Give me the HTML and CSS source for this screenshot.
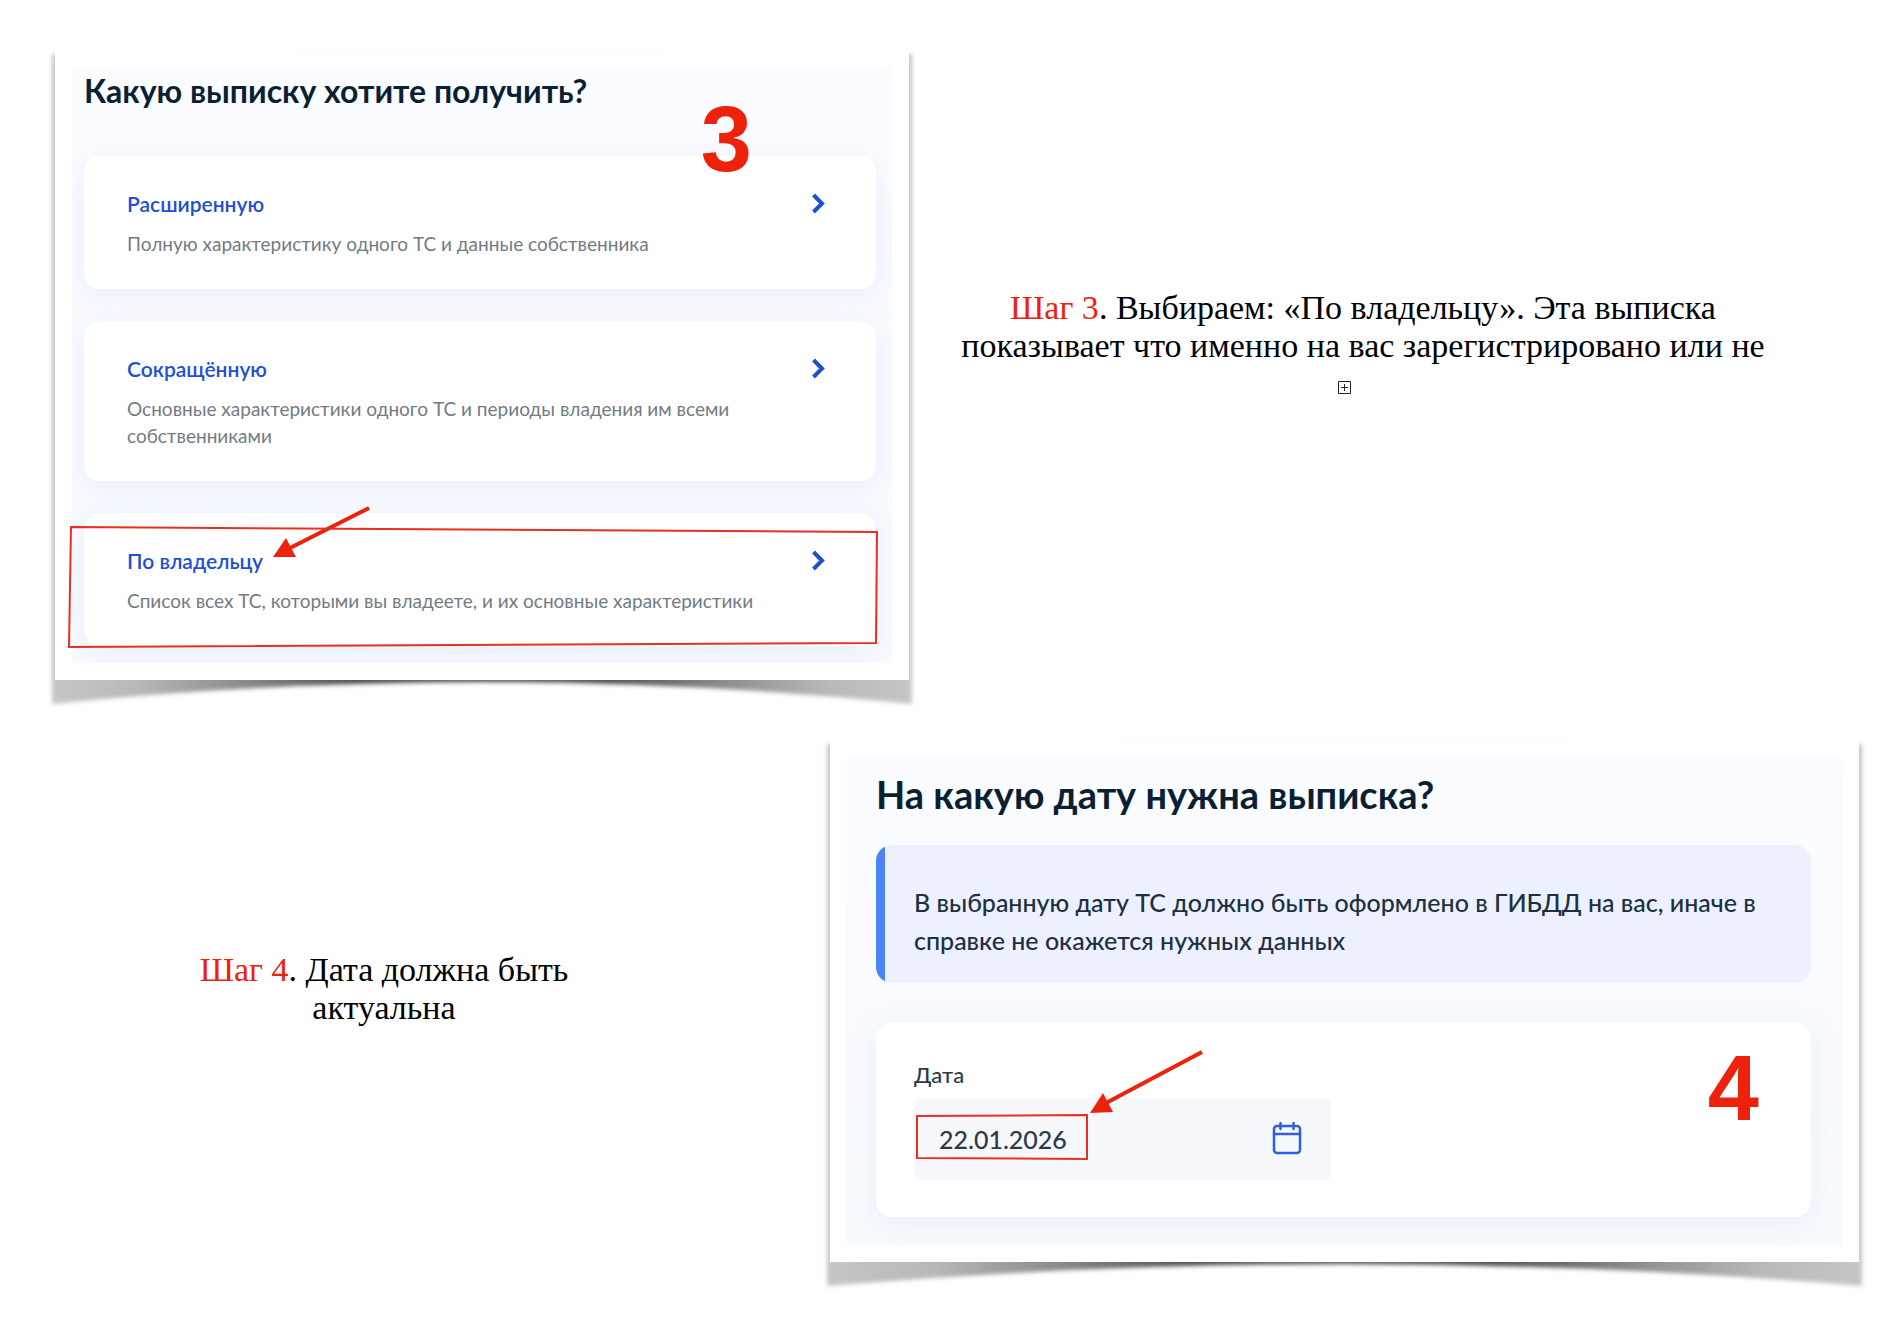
FILE: index.html
```html
<!DOCTYPE html>
<html lang="ru">
<head>
<meta charset="utf-8">
<title>Выписка: шаги 3 и 4</title>
<meta name="viewport" content="width=device-width, initial-scale=1">
<link rel="stylesheet" href="styles.css">
</head>
<body>
<main class="page">
  <section class="row row-three">
    <div class="frame">
      <svg class="curl" viewBox="0 0 854 630" preserveAspectRatio="none" aria-hidden="true">
        <defs>
          <linearGradient id="shade" x1="0" x2="1" y1="0" y2="0">
            <stop offset="0" stop-color="#c6c6c6"/><stop offset=".1" stop-color="#b8b8b8"/>
            <stop offset=".22" stop-color="#8c8c8c"/><stop offset=".35" stop-color="#505050"/>
            <stop offset=".65" stop-color="#505050"/><stop offset=".78" stop-color="#8c8c8c"/>
            <stop offset=".9" stop-color="#b8b8b8"/><stop offset="1" stop-color="#c6c6c6"/>
          </linearGradient>
          <filter id="soft" x="-5%" y="-5%" width="110%" height="112%"><feGaussianBlur stdDeviation="2"/></filter>
        </defs>
        <path d="M-3 4H857V654Q427 610-3 654Z" fill="url(#shade)" filter="url(#soft)"/>
      </svg>
      <div class="sheet">
        <div class="panel panel-list">
          <h2 class="title">Какую выписку хотите получить?</h2>
          <nav class="options">
            <a class="card option" href="#full">
              <span class="option-text"><span class="option-name">Расширенную</span><span class="option-note">Полную характеристику одного ТС и данные собственника</span></span>
              <svg class="chevron" viewBox="0 0 24 28" aria-hidden="true"><path d="M7.500 5 16 13.500 7.500 22"/></svg>
            </a>
            <a class="card option" href="#short">
              <span class="option-text"><span class="option-name">Сокращённую</span><span class="option-note">Основные характеристики одного ТС и периоды владения им всеми собственниками</span></span>
              <svg class="chevron" viewBox="0 0 24 28" aria-hidden="true"><path d="M7.500 5 16 13.500 7.500 22"/></svg>
            </a>
            <a class="card option" href="#owner">
              <span class="option-text"><span class="option-name">По владельцу</span><span class="option-note">Список всех ТС, которыми вы владеете, и их основные характеристики</span></span>
              <svg class="chevron" viewBox="0 0 24 28" aria-hidden="true"><path d="M7.500 5 16 13.500 7.500 22"/></svg>
              <svg class="arrow arrow-owner" viewBox="0 0 100 54" aria-hidden="true"><path class="shaft" d="M97 3 18 43"/><path class="head" d="M1 52 14 33 24 52Z"/></svg>
            </a>
          </nav>
        </div>
      </div>
      <svg class="mark mark-owner" viewBox="0 0 808 122" preserveAspectRatio="none" aria-hidden="true"><path d="M3 1 807 6 806 117 1 121Z"/></svg>
      <strong class="number number-three">3</strong>
    </div>
    <div class="step step-three">
      <p class="step-text"><span class="step-name">Шаг 3</span>. Выбираем: «По владельцу». Эта выписка показывает что именно на вас зарегистрировано или не</p>
      <button class="expand" type="button" aria-label="Развернуть"><svg viewBox="0 0 13 13" aria-hidden="true"><path d="M.5.5H12.500V12.500H.5ZM6.500 3V10M3 6.500H10"/></svg></button>
    </div>
  </section>

  <section class="row row-four">
    <div class="step step-four">
      <p class="step-text"><span class="step-name">Шаг 4</span>. Дата должна быть актуальна</p>
    </div>
    <div class="frame">
      <svg class="curl" viewBox="0 0 1029 522" preserveAspectRatio="none" aria-hidden="true">
        <path d="M-3 4H1032V546Q514 502-3 546Z" fill="url(#shade)" filter="url(#soft)"/>
      </svg>
      <div class="sheet">
        <div class="panel panel-date">
          <h2 class="title title-large">На какую дату нужна выписка?</h2>
          <p class="callout">В выбранную дату ТС должно быть оформлено в ГИБДД на вас, иначе в справке не окажется нужных данных</p>
          <form class="card date-card">
            <label class="label" for="date">Дата</label>
            <div class="field">
              <input class="input" id="date" type="text" value="22.01.2026">
              <button class="calendar" type="button" aria-label="Календарь">
                <svg viewBox="0 0 30 34" aria-hidden="true"><rect x="2" y="4" width="26" height="27" rx="3"/><path d="M2 12H28M8.500 1V7M21.500 1V7"/></svg>
              </button>
              <svg class="mark mark-date" viewBox="0 0 172 46" aria-hidden="true"><path d="M1 2 171 1 171 45 1 44Z"/></svg>
              <svg class="arrow arrow-date" viewBox="0 0 116 66" aria-hidden="true"><path class="shaft" d="M113 3 17 54"/><path class="head" d="M1 64 14 44 24 63Z"/></svg>
            </div>
          </form>
        </div>
      </div>
      <strong class="number number-four">4</strong>
    </div>
  </section>
</main>
</body>
</html>
```
FILE: styles.css
```css
* { box-sizing: border-box; }

body {
  margin: 0;
  background: #fff;
  color: #0b1f33;
  font-family: Lato, "Liberation Sans", sans-serif;
}

.page {
  display: flex;
  flex-direction: column;
  gap: 60px;
  padding: 50px 24px 60px 55px;
}

.row { display: grid; align-items: start; }
.row-three { grid-template-columns: 854fr 950fr; }
.row-four { grid-template-columns: 775fr 1029fr; }

/* Framed paper with curled corners */
.frame { position: relative; z-index: 0; }
.curl {
  position: absolute;
  inset: 0;
  z-index: -1;
  width: 100%;
  height: 100%;
  overflow: visible;
}
.sheet { padding: 17px; background: #fff; }
.panel {
  overflow: hidden;
  background: linear-gradient(#fafcff, #f7fafe);
}
.panel-list { padding: 4px 16px 17px 12px; }
.panel-date { padding: 13px 31px 28px 29px; }

.title {
  margin: 0 0 45px;
  font-size: 32px;
  line-height: 40px;
  font-weight: 700;
}
.title-large {
  margin-bottom: 27px;
  font-size: 38px;
  line-height: 48px;
}

.card {
  background: #fff;
  border-radius: 16px;
  box-shadow: 0 6px 24px rgba(190, 205, 240, .25);
}
.options { display: flex; flex-direction: column; gap: 32px; }
.option {
  position: relative;
  display: flex;
  justify-content: space-between;
  align-items: flex-start;
  gap: 48px;
  padding: 34px 46px 32px 43px;
  color: inherit;
  text-decoration: none;
}
.option-text { display: flex; flex-direction: column; gap: 12px; }
.option-name {
  color: #1d50d4;
  font-size: 21px;
  line-height: 28px;
  font-weight: 600;
}
.option-note {
  color: #727b84;
  font-size: 19px;
  line-height: 27px;
}
.chevron {
  flex: none;
  width: 24px;
  height: 28px;
  fill: none;
  stroke: #1d50d4;
  stroke-width: 4;
}

.callout {
  margin: 0 0 39px;
  padding: 38px 32px 24px 38px;
  border-radius: 16px;
  background: linear-gradient(90deg, #4c83f7 9px, #edf1ff 9px);
  color: #1d2f42;
  font-size: 25px;
  line-height: 38px;
  font-weight: 500;
}
.date-card { padding: 37px 37px 37px 38px; }
.label {
  display: block;
  margin-bottom: 7px;
  color: #2b3a4b;
  font-size: 22px;
  line-height: 32px;
  font-weight: 500;
}
.field {
  position: relative;
  display: flex;
  align-items: center;
  max-width: 417px;
  height: 82px;
  padding: 0 29px 0 25px;
  border-radius: 6px;
  background: #f5f7fb;
}
.input {
  flex: 1;
  min-width: 0;
  padding: 0;
  border: 0;
  outline: 0;
  background: none;
  color: #2b3a4b;
  font: 500 25px/38px Lato, "Liberation Sans", sans-serif;
}
.calendar {
  padding: 0;
  border: 0;
  background: none;
  cursor: pointer;
}
.calendar svg {
  display: block;
  width: 30px;
  height: 34px;
  fill: none;
  stroke: #2f5fdc;
  stroke-width: 2.5;
  stroke-linecap: round;
}

/* Red annotations drawn over the screens */
.mark, .arrow, .number { position: absolute; pointer-events: none; }
.mark { overflow: visible; fill: none; stroke: #e8301f; stroke-width: 2; }
.mark-owner { left: 13px; bottom: 32px; width: calc(100% - 44px); height: 122px; }
.mark-date { left: 2px; top: 16px; width: 172px; height: 46px; }
.arrow .shaft { fill: none; stroke: #ee220c; stroke-width: 4; }
.arrow .head { fill: #ee220c; }
.arrow-owner { left: 188px; top: -8px; width: 100px; height: 54px; }
.arrow-date { left: 175px; top: -49px; width: 116px; height: 66px; }
.number {
  color: #ee220c;
  font: 700 92px/92px "Liberation Sans", sans-serif;
}
.number-three { top: 43px; right: 157px; }
.number-four { right: 100px; bottom: 128px; }

/* Step captions */
.step {
  display: flex;
  flex-direction: column;
  align-items: center;
  color: #000;
  font: 34px/38px "Liberation Serif", serif;
  text-align: center;
}
.step-three { padding: 239px 42px 0 0; }
.step-four { padding: 211px 117px 0 0; }
.step-text { max-width: 808px; margin: 0; }
.step-four .step-text { max-width: 400px; }
.step-name { color: #ee220c; }
.expand {
  margin: 16px 38px 0 0;
  padding: 0;
  border: 0;
  background: none;
}
.expand svg {
  display: block;
  width: 13px;
  height: 13px;
  fill: none;
  stroke: #222;
}
```
